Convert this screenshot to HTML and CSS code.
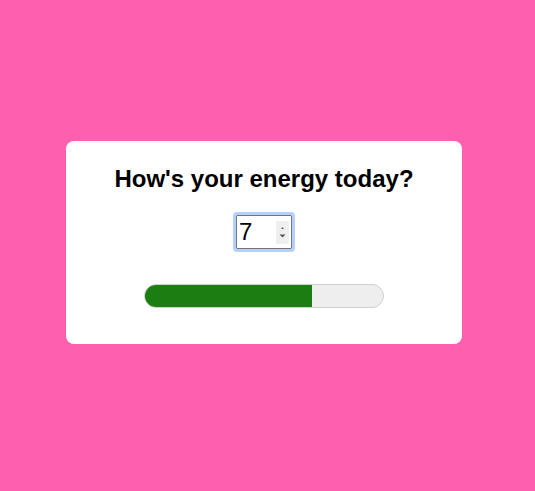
FILE: index.html
```html
<!DOCTYPE html>
<html lang="en">
<head>
<meta charset="utf-8">
<title>Energy</title>
<link rel="stylesheet" href="styles.css">
</head>
<body>
<main class="card">
  <h1 class="title">How's your energy today?</h1>
  <div class="num">
    <span class="num-value">7</span>
    <span class="spin">
      <svg width="13" height="23" viewBox="0 0 13 23">
        <path d="M5 8 L8 8 L6.5 6 Z" fill="#666"/>
        <path d="M3.5 13.5 L9.5 13.5 L6.5 16.5 Z" fill="#555"/>
      </svg>
    </span>
  </div>
  <div class="bar"><div class="bar-fill" style="width:70%"></div></div>
</main>
</body>
</html>
```
FILE: styles.css
```css
html, body {
  margin: 0;
  height: 100%;
}
body {
  background: #fe5fae;
  display: flex;
  align-items: center;
  justify-content: center;
  padding: 0 7px 6px 0;
  box-sizing: border-box;
  font-family: "Liberation Sans", Arial, sans-serif;
}
.card {
  width: 396px;
  box-sizing: border-box;
  background: #fff;
  border-radius: 8px;
  padding: 24px 20px 36px;
  display: flex;
  flex-direction: column;
  align-items: center;
}
.title {
  margin: 0;
  font-size: 24px;
  line-height: 28px;
  font-weight: bold;
  color: #000;
}
.num {
  margin-top: 22px;
  width: 56px;
  height: 34px;
  box-sizing: border-box;
  border: 1px solid #767676;
  border-radius: 1px;
  outline: 3px solid #b5d1fb;
  display: flex;
  align-items: center;
  background: #fff;
}
.num-value {
  font-size: 24px;
  line-height: 28px;
  padding-left: 2px;
  color: #000;
}
.spin {
  margin-left: auto;
  margin-right: 2px;
  width: 13px;
  height: 23px;
  background: #efefef;
  display: flex;
}
.bar {
  margin-top: 35px;
  width: 240px;
  height: 24px;
  box-sizing: border-box;
  border: 1px solid #d0d0d0;
  border-radius: 12px;
  background: #eeeeee;
  overflow: hidden;
  display: flex;
}
.bar-fill {
  height: 100%;
  background: #1c7e12;
}
```
